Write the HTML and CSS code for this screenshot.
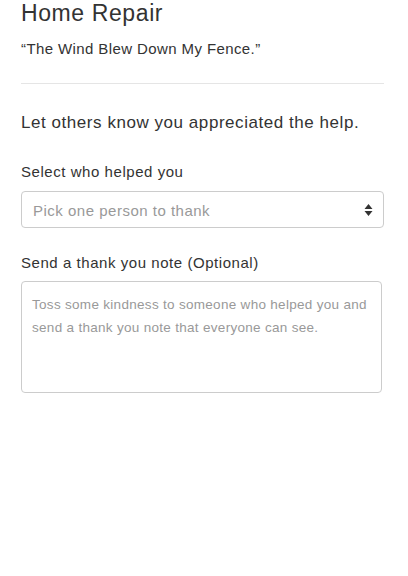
FILE: index.html
```html
<!DOCTYPE html>
<html>
<head>
<meta charset="utf-8">
<link rel="stylesheet" href="styles.css">
</head>
<body>
<div class="page">
  <h1 class="title">Home Repair</h1>
  <p class="subtitle">“The Wind Blew Down My Fence.”</p>
  <hr class="divider">
  <p class="lead">Let others know you appreciated the help.</p>
  <label class="label">Select who helped you</label>
  <div class="select">
    <span class="placeholder">Pick one person to thank</span>
    <svg class="arrows" width="9" height="14" viewBox="0 0 9 14"><path d="M4.5 1 L8.5 6 L0.5 6 Z M0.5 8 L8.5 8 L4.5 13 Z" fill="#333"/></svg>
  </div>
  <label class="label label-note">Send a thank you note (Optional)</label>
  <div class="textarea">Toss some kindness to someone who helped you and send a thank you note that everyone can see.</div>
</div>
</body>
</html>
```
FILE: styles.css
```css
html, body {
  margin: 0;
  padding: 0;
  background: #fff;
}
body {
  font-family: "Liberation Sans", Arial, sans-serif;
  color: #333;
}
.page {
  padding: 0 24px 0 21px;
  display: flex;
  flex-direction: column;
}
.title {
  font-size: 23px;
  font-weight: normal;
  line-height: 26px;
  letter-spacing: 0.6px;
  margin: 0;
}
.subtitle {
  font-size: 15px;
  line-height: 20px;
  letter-spacing: 0.4px;
  margin: 13px 0 0;
}
.divider {
  border: 0;
  border-top: 1px solid #e5e5e5;
  margin: 24px 0 0;
  width: 100%;
}
.lead {
  font-size: 17px;
  line-height: 24px;
  letter-spacing: 0.55px;
  margin: 27px 0 0;
}
.label {
  font-size: 15px;
  line-height: 20px;
  letter-spacing: 0.55px;
  margin-top: 27px;
}
.select {
  margin-top: 9px;
  height: 35px;
  border: 1px solid #ccc;
  border-radius: 4px;
  display: flex;
  align-items: center;
  justify-content: space-between;
  padding: 0 10px 0 11px;
}
.placeholder {
  font-size: 15px;
  letter-spacing: 0.5px;
  color: #999;
  padding-top: 2px;
}
.arrows {
  display: block;
}
.label-note {
  margin-top: 25px;
}
.textarea {
  margin-top: 8px;
  margin-right: 2px;
  height: 96px;
  border: 1px solid #ccc;
  border-radius: 4px;
  padding: 11px 10px 3px 10px;
  font-size: 13.5px;
  line-height: 23px;
  letter-spacing: 0.3px;
  color: #999;
}
```
